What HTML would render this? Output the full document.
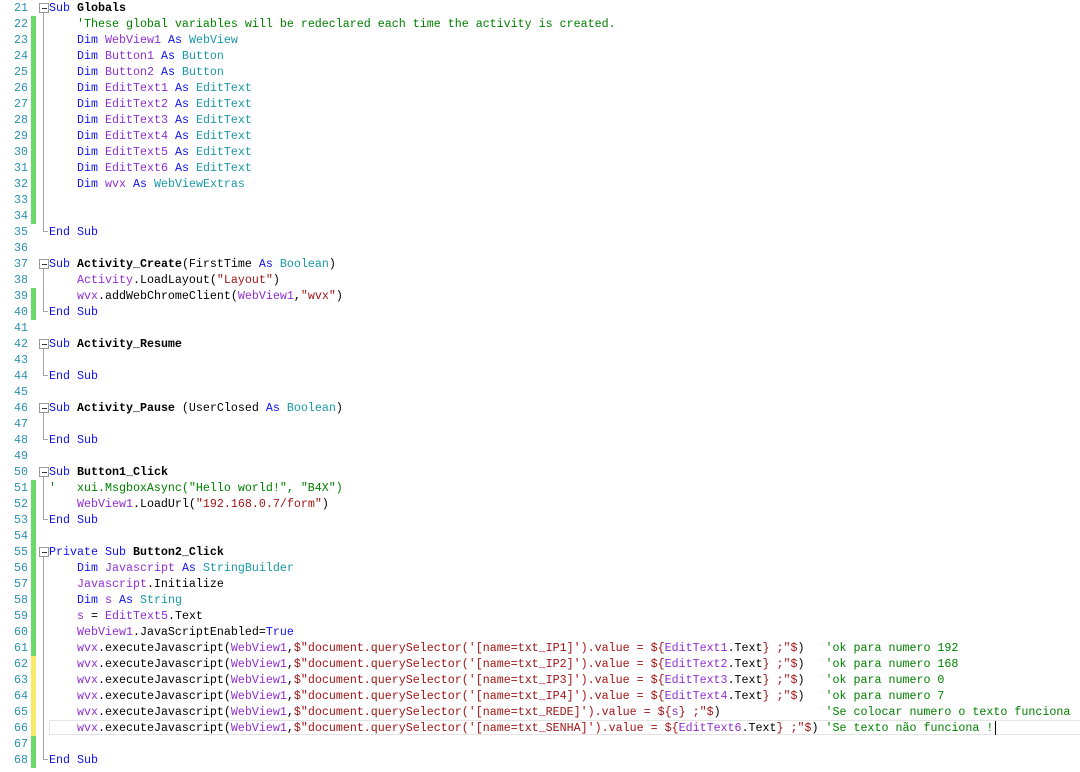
<!DOCTYPE html>
<html><head><meta charset="utf-8"><style>
body{margin:0;width:1080px;height:772px;background:#fff;overflow:hidden;position:relative;font-family:"Liberation Mono",monospace;font-size:11.67px;}
.l{position:absolute;left:0;height:16px;width:1080px;line-height:16px;}
.n{position:absolute;left:0;width:28px;text-align:right;color:#2b91af;}
.g{position:absolute;left:31px;width:5px;height:16px;}
.gg{background:#6ada6a}.gy{background:#f7ea6a}
.f{position:absolute;left:43px;width:1px;height:16px;background:#a5a5a5;}
.fe{position:absolute;left:43px;width:1px;height:8px;top:0;background:#a5a5a5;}
.fe:after{content:"";position:absolute;left:0;top:7px;width:5px;height:1px;background:#a5a5a5;}
.bx{position:absolute;left:39px;top:3px;width:8px;height:8px;border:1px solid #9a9a9a;background:#fff;}
.bx:after{content:"";position:absolute;left:2px;top:4px;width:5px;height:1px;background:#333;}
.fb{position:absolute;left:43px;top:13px;width:1px;height:3px;background:#a5a5a5;}
.c{position:absolute;left:49px;white-space:pre;color:#000;}
.k{color:#1010f0}.v{color:#9030d0}.t{color:#1a98a8}.cm{color:#008000}.s{color:#a31515}.b{font-weight:bold}
.cur{position:absolute;left:49px;top:0;width:1031px;height:15px;border:1px solid #e4e4e4;border-right:none;box-sizing:border-box;}
.caret{position:absolute;left:995px;top:1px;width:1px;height:14px;background:#000;}
</style></head><body>
<div class="l" style="top:0"><span class="n">21</span><span class="bx"></span><span class="fb"></span><span class="c"><span class="k">Sub</span> <span class="b">Globals</span></span></div>
<div class="l" style="top:16px"><span class="n">22</span><span class="g gg"></span><span class="f"></span><span class="c">    <span class="cm">'These global variables will be redeclared each time the activity is created.</span></span></div>
<div class="l" style="top:32px"><span class="n">23</span><span class="g gg"></span><span class="f"></span><span class="c">    <span class="k">Dim</span> <span class="v">WebView1</span> <span class="k">As</span> <span class="t">WebView</span></span></div>
<div class="l" style="top:48px"><span class="n">24</span><span class="g gg"></span><span class="f"></span><span class="c">    <span class="k">Dim</span> <span class="v">Button1</span> <span class="k">As</span> <span class="t">Button</span></span></div>
<div class="l" style="top:64px"><span class="n">25</span><span class="g gg"></span><span class="f"></span><span class="c">    <span class="k">Dim</span> <span class="v">Button2</span> <span class="k">As</span> <span class="t">Button</span></span></div>
<div class="l" style="top:80px"><span class="n">26</span><span class="g gg"></span><span class="f"></span><span class="c">    <span class="k">Dim</span> <span class="v">EditText1</span> <span class="k">As</span> <span class="t">EditText</span></span></div>
<div class="l" style="top:96px"><span class="n">27</span><span class="g gg"></span><span class="f"></span><span class="c">    <span class="k">Dim</span> <span class="v">EditText2</span> <span class="k">As</span> <span class="t">EditText</span></span></div>
<div class="l" style="top:112px"><span class="n">28</span><span class="g gg"></span><span class="f"></span><span class="c">    <span class="k">Dim</span> <span class="v">EditText3</span> <span class="k">As</span> <span class="t">EditText</span></span></div>
<div class="l" style="top:128px"><span class="n">29</span><span class="g gg"></span><span class="f"></span><span class="c">    <span class="k">Dim</span> <span class="v">EditText4</span> <span class="k">As</span> <span class="t">EditText</span></span></div>
<div class="l" style="top:144px"><span class="n">30</span><span class="g gg"></span><span class="f"></span><span class="c">    <span class="k">Dim</span> <span class="v">EditText5</span> <span class="k">As</span> <span class="t">EditText</span></span></div>
<div class="l" style="top:160px"><span class="n">31</span><span class="g gg"></span><span class="f"></span><span class="c">    <span class="k">Dim</span> <span class="v">EditText6</span> <span class="k">As</span> <span class="t">EditText</span></span></div>
<div class="l" style="top:176px"><span class="n">32</span><span class="g gg"></span><span class="f"></span><span class="c">    <span class="k">Dim</span> <span class="v">wvx</span> <span class="k">As</span> <span class="t">WebViewExtras</span></span></div>
<div class="l" style="top:192px"><span class="n">33</span><span class="g gg"></span><span class="f"></span></div>
<div class="l" style="top:208px"><span class="n">34</span><span class="g gg"></span><span class="f"></span></div>
<div class="l" style="top:224px"><span class="n">35</span><span class="fe"></span><span class="c"><span class="k">End Sub</span></span></div>
<div class="l" style="top:240px"><span class="n">36</span></div>
<div class="l" style="top:256px"><span class="n">37</span><span class="bx"></span><span class="fb"></span><span class="c"><span class="k">Sub</span> <span class="b">Activity_Create</span>(FirstTime <span class="k">As</span> <span class="t">Boolean</span>)</span></div>
<div class="l" style="top:272px"><span class="n">38</span><span class="f"></span><span class="c">    <span class="v">Activity</span>.LoadLayout(<span class="s">"Layout"</span>)</span></div>
<div class="l" style="top:288px"><span class="n">39</span><span class="g gg"></span><span class="f"></span><span class="c">    <span class="v">wvx</span>.addWebChromeClient(<span class="v">WebView1</span>,<span class="s">"wvx"</span>)</span></div>
<div class="l" style="top:304px"><span class="n">40</span><span class="g gg"></span><span class="fe"></span><span class="c"><span class="k">End Sub</span></span></div>
<div class="l" style="top:320px"><span class="n">41</span></div>
<div class="l" style="top:336px"><span class="n">42</span><span class="bx"></span><span class="fb"></span><span class="c"><span class="k">Sub</span> <span class="b">Activity_Resume</span></span></div>
<div class="l" style="top:352px"><span class="n">43</span><span class="f"></span></div>
<div class="l" style="top:368px"><span class="n">44</span><span class="fe"></span><span class="c"><span class="k">End Sub</span></span></div>
<div class="l" style="top:384px"><span class="n">45</span></div>
<div class="l" style="top:400px"><span class="n">46</span><span class="bx"></span><span class="fb"></span><span class="c"><span class="k">Sub</span> <span class="b">Activity_Pause</span> (UserClosed <span class="k">As</span> <span class="t">Boolean</span>)</span></div>
<div class="l" style="top:416px"><span class="n">47</span><span class="f"></span></div>
<div class="l" style="top:432px"><span class="n">48</span><span class="fe"></span><span class="c"><span class="k">End Sub</span></span></div>
<div class="l" style="top:448px"><span class="n">49</span></div>
<div class="l" style="top:464px"><span class="n">50</span><span class="bx"></span><span class="fb"></span><span class="c"><span class="k">Sub</span> <span class="b">Button1_Click</span></span></div>
<div class="l" style="top:480px"><span class="n">51</span><span class="g gg"></span><span class="f"></span><span class="c"><span class="cm">'   xui.MsgboxAsync("Hello world!", "B4X")</span></span></div>
<div class="l" style="top:496px"><span class="n">52</span><span class="g gg"></span><span class="f"></span><span class="c">    <span class="v">WebView1</span>.LoadUrl(<span class="s">"192.168.0.7/form"</span>)</span></div>
<div class="l" style="top:512px"><span class="n">53</span><span class="g gg"></span><span class="fe"></span><span class="c"><span class="k">End Sub</span></span></div>
<div class="l" style="top:528px"><span class="n">54</span><span class="g gg"></span></div>
<div class="l" style="top:544px"><span class="n">55</span><span class="g gg"></span><span class="bx"></span><span class="fb"></span><span class="c"><span class="k">Private Sub</span> <span class="b">Button2_Click</span></span></div>
<div class="l" style="top:560px"><span class="n">56</span><span class="g gg"></span><span class="f"></span><span class="c">    <span class="k">Dim</span> <span class="v">Javascript</span> <span class="k">As</span> <span class="t">StringBuilder</span></span></div>
<div class="l" style="top:576px"><span class="n">57</span><span class="g gg"></span><span class="f"></span><span class="c">    <span class="v">Javascript</span>.Initialize</span></div>
<div class="l" style="top:592px"><span class="n">58</span><span class="g gg"></span><span class="f"></span><span class="c">    <span class="k">Dim</span> <span class="v">s</span> <span class="k">As</span> <span class="t">String</span></span></div>
<div class="l" style="top:608px"><span class="n">59</span><span class="g gg"></span><span class="f"></span><span class="c">    <span class="v">s</span> = <span class="v">EditText5</span>.Text</span></div>
<div class="l" style="top:624px"><span class="n">60</span><span class="g gg"></span><span class="f"></span><span class="c">    <span class="v">WebView1</span>.JavaScriptEnabled=<span class="k">True</span></span></div>
<div class="l" style="top:640px"><span class="n">61</span><span class="g gg"></span><span class="f"></span><span class="c">    <span class="v">wvx</span>.executeJavascript(<span class="v">WebView1</span>,<span class="s">$"document.querySelector('[name=txt_IP1]').value = ${</span><span class="v">EditText1</span>.Text<span class="s">} ;"$</span>)   <span class="cm">'ok para numero 192</span></span></div>
<div class="l" style="top:656px"><span class="n">62</span><span class="g gy"></span><span class="f"></span><span class="c">    <span class="v">wvx</span>.executeJavascript(<span class="v">WebView1</span>,<span class="s">$"document.querySelector('[name=txt_IP2]').value = ${</span><span class="v">EditText2</span>.Text<span class="s">} ;"$</span>)   <span class="cm">'ok para numero 168</span></span></div>
<div class="l" style="top:672px"><span class="n">63</span><span class="g gy"></span><span class="f"></span><span class="c">    <span class="v">wvx</span>.executeJavascript(<span class="v">WebView1</span>,<span class="s">$"document.querySelector('[name=txt_IP3]').value = ${</span><span class="v">EditText3</span>.Text<span class="s">} ;"$</span>)   <span class="cm">'ok para numero 0</span></span></div>
<div class="l" style="top:688px"><span class="n">64</span><span class="g gy"></span><span class="f"></span><span class="c">    <span class="v">wvx</span>.executeJavascript(<span class="v">WebView1</span>,<span class="s">$"document.querySelector('[name=txt_IP4]').value = ${</span><span class="v">EditText4</span>.Text<span class="s">} ;"$</span>)   <span class="cm">'ok para numero 7</span></span></div>
<div class="l" style="top:704px"><span class="n">65</span><span class="g gy"></span><span class="f"></span><span class="c">    <span class="v">wvx</span>.executeJavascript(<span class="v">WebView1</span>,<span class="s">$"document.querySelector('[name=txt_REDE]').value = ${</span><span class="v">s</span><span class="s">} ;"$</span>)               <span class="cm">'Se colocar numero o texto funciona</span></span></div>
<div class="l" style="top:720px"><span class="n">66</span><span class="g gy"></span><span class="f"></span><span class="cur"></span><span class="c">    <span class="v">wvx</span>.executeJavascript(<span class="v">WebView1</span>,<span class="s">$"document.querySelector('[name=txt_SENHA]').value = ${</span><span class="v">EditText6</span>.Text<span class="s">} ;"$</span>) <span class="cm">'Se texto não funciona !</span></span><span class="caret"></span></div>
<div class="l" style="top:736px"><span class="n">67</span><span class="g gg"></span><span class="f"></span></div>
<div class="l" style="top:752px"><span class="n">68</span><span class="g gg"></span><span class="fe"></span><span class="c"><span class="k">End Sub</span></span></div>
</body></html>
